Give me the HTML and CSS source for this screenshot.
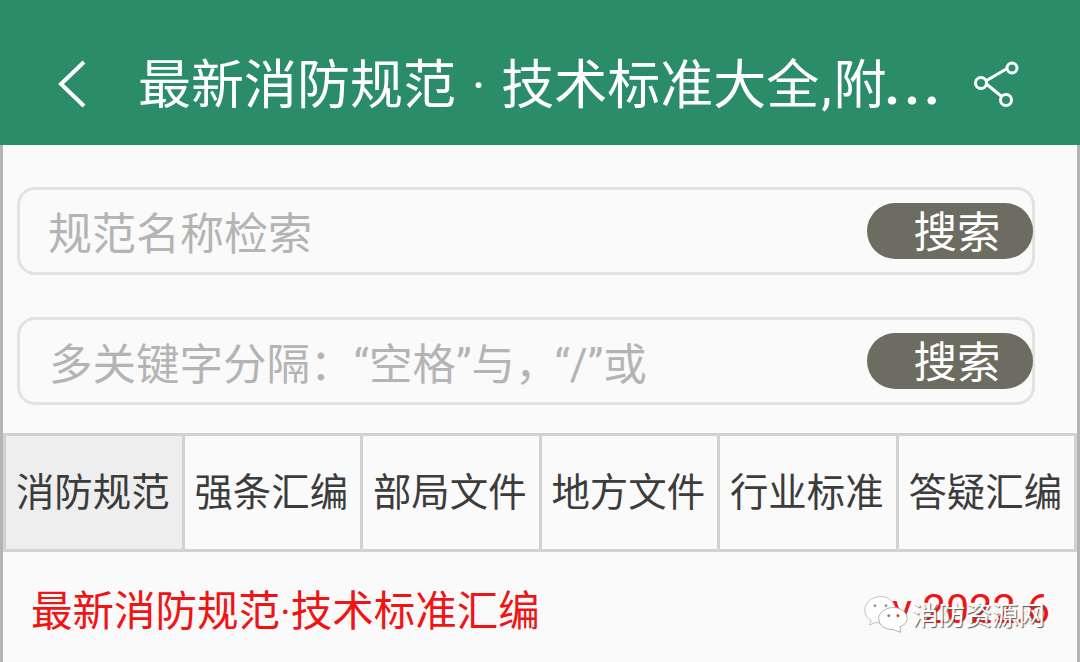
FILE: index.html
```html
<!DOCTYPE html>
<html>
<head>
    <title>最新消防规范</title>
    <meta name="viewport" content="width=device-width, initial-scale=1.0">
    <link rel="stylesheet" href="styles.css">
</head>
<body>
    <!-- Top Bar -->
    <div class="top-bar">
        <svg class="back-icon" width="30" height="48" viewBox="0 0 30 48"><path d="M26 2 L3 24 L26 46" fill="none" stroke="#fff" stroke-width="4"/></svg>
        <div class="title">最新消防规范 · 技术标准大全<span class="comma">,</span>附<span class="dots">...</span></div>
        <svg class="share-icon" width="46" height="48" viewBox="0 0 46 48">
            <path d="M10 22 L34 8 M10 22 L32 40" fill="none" stroke="#fff" stroke-width="3"/>
            <circle cx="7" cy="23" r="5.5" fill="#2a8c69" stroke="#fff" stroke-width="3"/>
            <circle cx="38" cy="8" r="5" fill="#2a8c69" stroke="#fff" stroke-width="3"/>
            <circle cx="32" cy="40" r="5.5" fill="#2a8c69" stroke="#fff" stroke-width="3"/>
        </svg>
    </div>

    <div class="content">
        <!-- Search -->
        <div class="search-box">
            <span class="placeholder">规范名称检索</span>
            <button class="search-btn">搜索</button>
        </div>
        <div class="search-box second">
            <span class="placeholder small">多关键字分隔：“空格”与<span class="tight">，</span>“/”或</span>
            <button class="search-btn">搜索</button>
        </div>

        <!-- Tab Bar -->
        <div class="tab-bar">
            <div class="tab active">消防规范</div>
            <div class="tab">强条汇编</div>
            <div class="tab">部局文件</div>
            <div class="tab">地方文件</div>
            <div class="tab">行业标准</div>
            <div class="tab">答疑汇编</div>
        </div>

        <!-- List -->
        <div class="list-row">
            <span>最新消防规范·技术标准汇编</span>
            <span>v 2022.6</span>
        </div>
    </div>

    <!-- Watermark -->
    <div class="watermark">
        <svg width="46" height="38" viewBox="0 0 50 40">
            <path d="M20 1 C9 1 2 8 2 16 C2 21 5 25 9 27 L7 32 L14 29 C17 30 20 30 24 29 L36 20 C36 9 29 1 20 1 Z" fill="#fff" stroke="#bbb" stroke-width="1"/>
            <path d="M33 13 C24 13 17 19 17 25 C17 32 24 37 33 37 L41 40 L40 34 C45 32 48 29 48 25 C48 19 42 13 33 13 Z" fill="#fff" stroke="#aaa" stroke-width="1"/>
            <circle cx="13" cy="11" r="1.6" fill="#999"/>
            <circle cx="25" cy="11" r="1.6" fill="#999"/>
            <circle cx="28" cy="22" r="1.6" fill="#888"/>
            <circle cx="38" cy="22" r="1.6" fill="#d33"/>
        </svg>
        <span>消防资源网</span>
    </div>
</body>
</html>
```

FILE: styles.css
```css
html, body {
    margin: 0;
    height: 662px;
    overflow: hidden;
}

body {
    position: relative;
    font-family: Roboto, "Noto Sans CJK SC", sans-serif;
    background: #fafafa;
}

.top-bar {
    height: 145px;
    box-sizing: border-box;
    padding: 16px 60px 0 58px;
    display: flex;
    align-items: center;
    background: #2a8c69;
    color: white;
}

.back-icon {
    flex: none;
    margin-top: 6px;
}

.title {
    margin-left: 50px;
    font-size: 53px;
    word-spacing: 2.5px;
    white-space: nowrap;
    flex: 1;
}

.comma {
    margin: 0 2px;
}

.dots {
    margin-left: -2px;
    letter-spacing: 4.5px;
    font-weight: bold;
}

.share-icon {
    flex: none;
    margin-top: 7px;
}

.content {
    height: 517px;
    box-sizing: border-box;
    padding-top: 42px;
    border-left: 3px solid #b4b4b4;
    border-right: 3px solid #b4b4b4;
}

.search-box {
    display: flex;
    align-items: center;
    justify-content: space-between;
    height: 88px;
    box-sizing: border-box;
    margin: 0 42px 0 14px;
    padding: 0 0 0 28px;
    border: 3px solid #e2e2e2;
    border-radius: 18px;
}

.search-box.second {
    margin-top: 42px;
}

.placeholder {
    font-size: 44px;
    color: #b4b4b4;
    white-space: nowrap;
}

.placeholder.small {
    font-size: 43.5px;
    margin-left: 1px;
}

.tight {
    margin-right: -4px;
}

.search-btn {
    width: 166px;
    height: 56px;
    margin-right: -1px;
    padding: 5px 0 0 14px;
    border: none;
    border-radius: 28px;
    background: #6d6c60;
    color: white;
    font-family: inherit;
    font-size: 43.5px;
    line-height: 51px;
}

.tab-bar {
    display: flex;
    height: 119px;
    box-sizing: border-box;
    margin-top: 28px;
    border: 3px solid #d2d2d2;
}

.tab {
    flex: 1;
    display: flex;
    align-items: center;
    justify-content: center;
    font-size: 38.4px;
    color: #3c3c3c;
    white-space: nowrap;
    padding: 0 2px 7px 0;
    border-right: 3px solid #d2d2d2;
}

.tab:last-child {
    border-right: none;
}

.tab.active {
    background: #eeeeee;
}

.list-row {
    display: flex;
    justify-content: space-between;
    align-items: center;
    padding: 26px 27px 0 28px;
    font-size: 41.5px;
    color: #f01414;
    white-space: nowrap;
}

.watermark {
    position: absolute;
    left: 863px;
    top: 594px;
    display: flex;
    align-items: center;
    gap: 3px;
    color: white;
    font-size: 26.6px;
    text-shadow: 1px 1px 1px #555;
}
```
